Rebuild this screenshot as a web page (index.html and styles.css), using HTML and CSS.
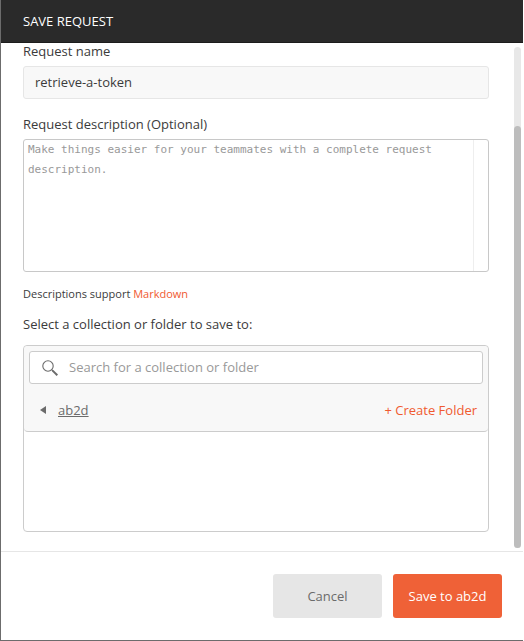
FILE: index.html
```html
<!DOCTYPE html>
<html lang="en">
<head>
<meta charset="utf-8">
<title>Save Request</title>
<meta name="viewport" content="width=device-width, initial-scale=1">
<link rel="stylesheet" href="styles.css">
</head>
<body>
<form class="modal" role="dialog" aria-labelledby="modal-title">
  <header class="modal-header">
    <h1 class="modal-title" id="modal-title">SAVE REQUEST</h1>
  </header>
  <main class="modal-body">
    <div class="fields">
      <label class="label" for="name">Request name</label>
      <input class="name-input" id="name" type="text" value="retrieve-a-token">
      <label class="label label-spaced" for="description">Request description (Optional)</label>
      <div class="editor">
        <textarea class="editor-text" id="description" placeholder="Make things easier for your teammates with a complete request description."></textarea>
      </div>
      <p class="hint">Descriptions support <a class="link" href="#markdown">Markdown</a></p>
      <label class="label" for="search">Select a collection or folder to save to:</label>
      <section class="picker">
        <div class="picker-head">
          <div class="search">
            <svg class="search-icon" viewBox="0 0 16 16" aria-hidden="true">
              <circle cx="6" cy="6" r="5.2" fill="none" stroke="#6b6b6b" stroke-width="1.1"/>
              <path d="M9.7 9.7 11 11" stroke="#6b6b6b" stroke-width="1.1"/>
              <path d="M10.6 10.6 15.3 15.3" stroke="#6b6b6b" stroke-width="2"/>
            </svg>
            <input class="search-input" id="search" type="text" placeholder="Search for a collection or folder">
          </div>
          <div class="crumb">
            <svg class="back-icon" viewBox="0 0 6 8" aria-hidden="true"><path d="M6 0v8L0 4z" fill="#6b6b6b"/></svg>
            <a class="crumb-link" href="#ab2d">ab2d</a>
            <button class="create" type="button">+ Create Folder</button>
          </div>
        </div>
      </section>
    </div>
    <div class="scrollbar" aria-hidden="true"><div class="scroll-thumb"></div></div>
  </main>
  <footer class="modal-footer">
    <button class="button button-cancel" type="button">Cancel</button>
    <button class="button button-save" type="submit">Save to ab2d</button>
  </footer>
</form>
</body>
</html>
```

FILE: styles.css
```css
* {
  box-sizing: border-box;
}

body {
  margin: 0;
  padding: 0 1px 1px 0;
  min-height: 100vh;
  display: flex;
  background: #fff;
  color: #3b3b3b;
  font: 13px/20px "Open Sans", "Noto Sans", sans-serif;
}

input,
textarea,
button {
  font: inherit;
  color: inherit;
}

.modal {
  flex: 1;
  min-width: 0;
  display: flex;
  flex-direction: column;
  border: solid #6c6c6c;
  border-width: 0 0 1px 1px;
}

.modal-header {
  padding: 11px 22px;
  background: #2a2a2a;
  border-bottom: 1px solid #1c1c1c;
}

.modal-title {
  margin: 0;
  color: #fff;
  font-size: 13px;
  line-height: 20px;
  font-weight: 400;
}

.modal-body {
  flex: 1;
  display: flex;
  gap: 25px;
  padding: 0 2px 3px 22px;
}

.fields {
  flex: 1;
  min-width: 0;
  display: flex;
  flex-direction: column;
}

.label {
  line-height: 16px;
}

.label-spaced {
  margin-top: 17px;
}

.name-input {
  width: 100%;
  height: 33px;
  margin-top: 7px;
  padding: 0 11px 2px;
  border: 1px solid #e6e6e6;
  border-radius: 3px;
  background: #f8f8f8;
}

.editor {
  display: flex;
  height: 133px;
  margin-top: 7px;
  padding-right: 14px;
  border: 1px solid #c8c8c8;
  border-radius: 3px;
}

.editor-text {
  flex: 1;
  min-width: 0;
  padding: 0 4px;
  border: 0;
  border-right: 1px solid #eee;
  background: none;
  resize: none;
  font: 11px/20px "DejaVu Sans Mono", monospace;
}

.editor-text::placeholder,
.search-input::placeholder {
  color: #999;
  opacity: 1;
}

.hint {
  margin: 12px 0;
  font-size: 11px;
  line-height: 20px;
}

.link {
  color: #f05a30;
  text-decoration: none;
}

.picker {
  flex: 1;
  min-height: 187px;
  margin: 13px 0 16px;
  border: 1px solid #ccc;
  border-radius: 4px;
}

.picker-head {
  padding: 5px 5px 0;
  background: #f8f8f8;
  border-bottom: 1px solid #ccc;
  border-radius: 4px;
}

.search {
  display: flex;
  align-items: center;
  gap: 11px;
  height: 33px;
  padding: 0 12px;
  border: 1px solid #ccc;
  border-radius: 3px;
  background: #fff;
}

.search-icon {
  flex: none;
  width: 16px;
  height: 16px;
}

.search-input {
  flex: 1;
  min-width: 0;
  padding: 0 0 2px;
  border: 0;
  background: none;
}

.crumb {
  display: flex;
  align-items: center;
  gap: 12px;
  height: 47px;
  padding: 5px 6px 0 11px;
}

.back-icon {
  width: 6px;
  height: 8px;
}

.crumb-link {
  color: #6b6b6b;
}

.create {
  margin-left: auto;
  padding: 0;
  border: 0;
  background: none;
  color: #f05a30;
}

.scrollbar {
  width: 7px;
  margin-top: 4px;
  padding-top: 79px;
  display: flex;
  border-radius: 4px;
  background: #e8e8e8;
}

.scroll-thumb {
  flex: 1;
  border-radius: 4px;
  background: #bdbdbd;
}

.modal-footer {
  display: flex;
  justify-content: flex-end;
  gap: 11px;
  padding: 22px 21px 22px;
  border-top: 1px solid #e6e6e6;
}

.button {
  width: 109px;
  height: 44px;
  padding: 0;
  border: 0;
  border-radius: 3px;
}

.button-cancel {
  background: #e6e6e6;
  color: #6b6b6b;
}

.button-save {
  background: #ef6137;
  color: #fff;
}
```
